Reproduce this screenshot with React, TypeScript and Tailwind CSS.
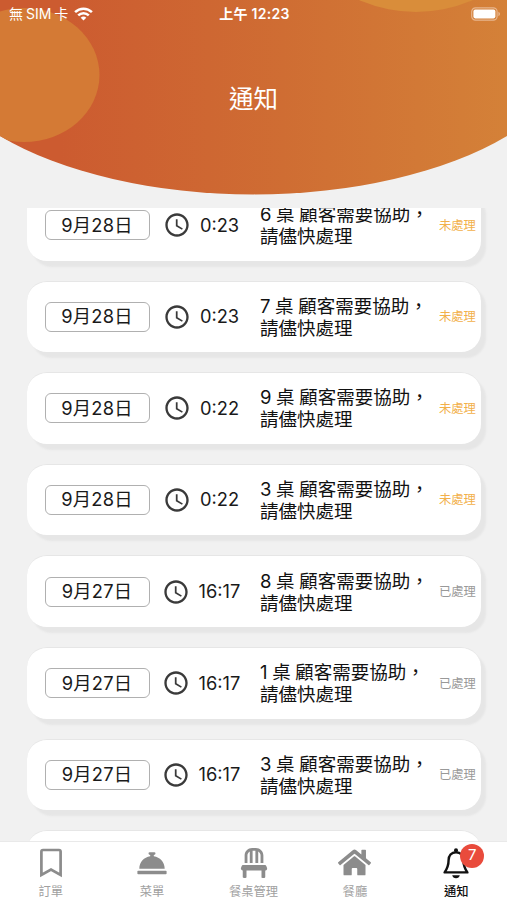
import React from "react";
import { FaChair, FaHome } from "react-icons/fa";
import { MdAccessTime } from "react-icons/md";

type Notice = { table: number; date: string; time: string; done: boolean };

const notices: Notice[] = [
  { table: 6, date: "9月28日", time: "0:23", done: false },
  { table: 7, date: "9月28日", time: "0:23", done: false },
  { table: 9, date: "9月28日", time: "0:22", done: false },
  { table: 3, date: "9月28日", time: "0:22", done: false },
  { table: 8, date: "9月27日", time: "16:17", done: true },
  { table: 1, date: "9月27日", time: "16:17", done: true },
  { table: 3, date: "9月27日", time: "16:17", done: true },
];

function NoticeCard({ table, date, time, done }: Notice) {
  return (
    <li className="flex h-[71.6px] shrink-0 items-center rounded-[20px] border-t border-[#e6e6e6] bg-white pl-[18px] shadow-[5px_6px_2px_#e6e6e6]">
      <div className="flex h-[30px] w-[105px] shrink-0 items-center justify-center rounded-[6px] border-[1.5px] border-[#b0b0b0] pr-[1px] text-[18.3px] tracking-[0.2px] text-[#1a1a1a]">
        {date}
      </div>
      <div className="flex w-[110px] shrink-0 items-center justify-center gap-[9px] pr-[8px] text-[18.3px] text-[#1a1a1a]">
        <MdAccessTime size={28} color="#3a3a3a" />
        <span>{time}</span>
      </div>
      <p className="w-[179px] shrink-0 text-[18.5px] leading-[22px] [word-spacing:-0.6px] whitespace-nowrap text-[#111]">
        {table} 桌 顧客需要協助，
        <br />
        請儘快處理
      </p>
      <span className={done ? "pt-[1px] text-[12.3px] whitespace-nowrap text-[#999]" : "pt-[1px] text-[12.3px] whitespace-nowrap text-[#f2b04a]"}>
        {done ? "已處理" : "未處理"}
      </span>
    </li>
  );
}

function Tab({ label, active, children }: { label: string; active?: boolean; children: React.ReactNode }) {
  return (
    <div className={active ? "flex flex-1 flex-col items-center text-[#111]" : "flex flex-1 flex-col items-center text-[#8c8c8c]"}>
      <div className="flex h-[41px] shrink-0 items-center justify-center">{children}</div>
      <span className={active ? "text-[12.3px] leading-[17px] font-medium" : "text-[12.3px] leading-[17px] text-[#a0a0a0]"}>{label}</span>
    </div>
  );
}

export default function App() {
  return (
    <div className="flex h-[900px] w-[507px] flex-col overflow-hidden bg-[#f1f1f1] font-[Inter,'Noto_Sans_CJK_TC',sans-serif]">
      <header className="relative h-[208px] shrink-0 overflow-hidden">
        <svg className="absolute inset-0" width="507" height="208" viewBox="0 0 507 208">
          <defs>
            <linearGradient id="warm" gradientUnits="userSpaceOnUse" x1="60" y1="0" x2="507" y2="0">
              <stop offset="0" stopColor="#cc5b30" />
              <stop offset="0.5" stopColor="#cf6d33" />
              <stop offset="1" stopColor="#d48138" />
            </linearGradient>
            <clipPath id="dome">
              <path d="M0 0H507V136A325 156 0 0 1 0 136Z" />
            </clipPath>
          </defs>
          <g clipPath="url(#dome)">
            <rect width="507" height="208" fill="url(#warm)" />
            <ellipse cx="24" cy="75" rx="75.5" ry="67" fill="#d47a35" />
            <circle cx="416" cy="-129" r="141" fill="#d98d3a" />
          </g>
        </svg>
        <div className="relative grid h-[28px] grid-cols-3 items-center pr-[6px] pl-[8px] text-white">
          <div className="flex items-center gap-[6px] pl-[1px]">
            <span className="text-[14px] leading-[20px] [word-spacing:-1px] whitespace-nowrap">無 SIM 卡</span>
            <svg width="19" height="14" viewBox="0 0 19 14" fill="none" stroke="white" strokeWidth="2.5">
              <path d="M1.1 5.2C5.8.6 13.2.6 17.9 5.2" />
              <path d="M4.2 8.4C7.2 5.5 11.8 5.5 14.8 8.4" />
              <path d="M6.7 10.7C8.2 9.2 10.8 9.2 12.3 10.7L9.5 13.6Z" fill="white" stroke="none" />
            </svg>
          </div>
          <span className="text-center text-[14px] leading-[20px] font-semibold tracking-[0.3px] whitespace-nowrap">上午 12:23</span>
          <div className="flex justify-end">
            <svg width="30" height="14" viewBox="0 0 30 14">
              <rect x="0.7" y="0.9" width="25.4" height="12.2" rx="3.8" fill="none" stroke="#e8b68e" strokeWidth="1.2" />
              <rect x="2.4" y="2.6" width="22" height="8.8" rx="1.8" fill="white" />
              <path d="M27.4 4.8C29.5 5.6 29.5 8.4 27.4 9.2Z" fill="#e8b68e" />
            </svg>
          </div>
        </div>
        <h1 className="relative mt-[53px] text-center text-[24.5px] leading-[36px] font-normal text-white">通知</h1>
      </header>

      <main className="flex min-h-0 flex-1 flex-col overflow-hidden">
        <ul className="-mt-[19px] flex flex-col gap-[20px] pr-[26px] pl-[27px]">
          {notices.map((n, i) => (
            <NoticeCard key={i} {...n} />
          ))}
          <li className="h-[71.6px] shrink-0 rounded-[20px] border-t border-[#e6e6e6] bg-white" />
        </ul>
      </main>

      <nav className="flex h-[59px] shrink-0 border-t border-[#e9e9e9] bg-white">
        <Tab label="訂單">
          <svg width="24" height="30" viewBox="0 0 24 30" fill="none" stroke="currentColor" strokeWidth="2.7">
            <path d="M2.4 27V3.6Q2.4 2 4 2H20Q21.6 2 21.6 3.6V27L12 21.6Z" />
          </svg>
        </Tab>
        <Tab label="菜單">
          <svg width="30" height="24" viewBox="0 0 30 24" fill="currentColor">
            <path d="M11.5 2.4Q11.5 1.2 12.7 1.2H17.3Q18.5 1.2 18.5 2.4Q18.5 3.5 16.8 4V5.3C23 6.2 27.5 11 27.7 17.8H2.3C2.5 11 7 6.2 13.2 5.3V4Q11.5 3.5 11.5 2.4Z" />
            <rect x="0.4" y="19.8" width="29.2" height="3.4" rx="0.8" />
          </svg>
        </Tab>
        <Tab label="餐桌管理">
          <FaChair size={30} />
        </Tab>
        <Tab label="餐廳">
          <FaHome size={33} />
        </Tab>
        <Tab label="通知" active>
          <div className="relative">
            <svg width="28" height="32" viewBox="0 0 28 32" fill="none" stroke="currentColor" strokeWidth="2.4" strokeLinejoin="round">
              <circle cx="14" cy="3.2" r="2" fill="currentColor" stroke="none" />
              <path d="M14 5.2C9.3 5.2 6.6 8.6 6.6 13C6.6 18.6 5.6 21.2 2.6 25.4H25.4C22.4 21.2 21.4 18.6 21.4 13C21.4 8.6 18.7 5.2 14 5.2Z" />
              <path d="M10.2 28.2H17.8C17.4 30.2 16 31.2 14 31.2C12 31.2 10.6 30.2 10.2 28.2Z" fill="currentColor" stroke="none" />
            </svg>
            <span className="absolute -top-[3px] left-[18px] flex size-[24px] items-center justify-center rounded-full bg-[#e94b3c] text-[15px] text-white">7</span>
          </div>
        </Tab>
      </nav>
    </div>
  );
}
